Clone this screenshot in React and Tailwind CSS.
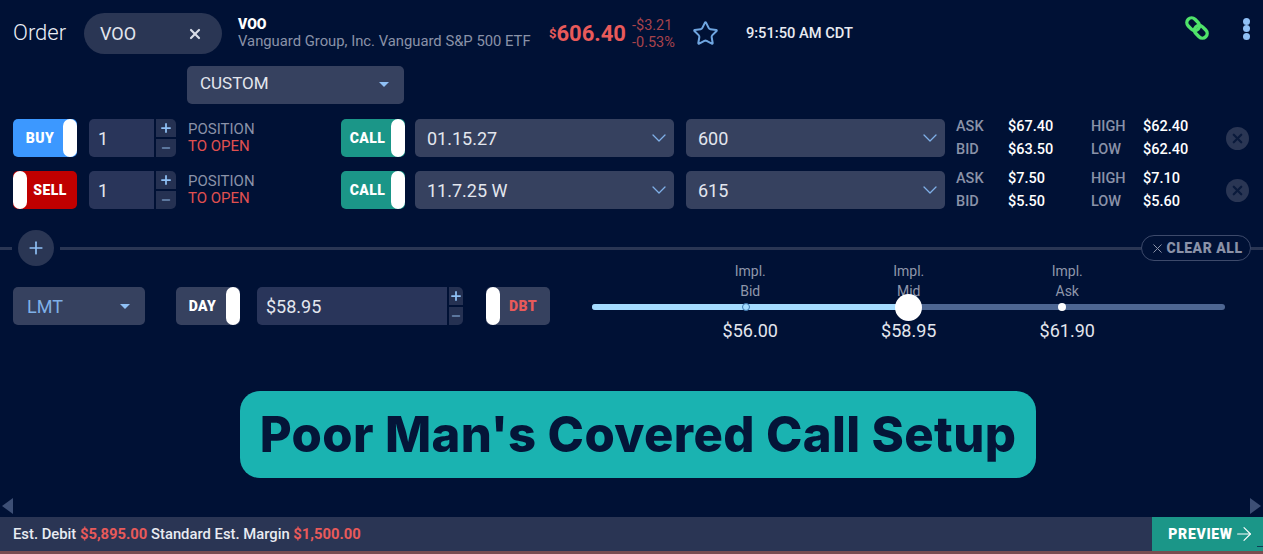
import React from 'react';
import { ChevronDown, Star, X, Plus, Minus, ArrowRight } from 'lucide-react';

const legs = [
    { side: 'BUY', expiry: '01.15.27', strike: '600', ask: '$67.40', bid: '$63.50', high: '$62.40', low: '$62.40' },
    { side: 'SELL', expiry: '11.7.25 W', strike: '615', ask: '$7.50', bid: '$5.50', high: '$7.10', low: '$5.60' },
];

const marks = [
    { label: 'Bid', price: '$56.00' },
    { label: 'Mid', price: '$58.95' },
    { label: 'Ask', price: '$61.90' },
];

const Caret = () => (
    <span className="w-0 h-0 border-x-[5px] border-x-transparent border-t-[5px] border-t-[#8fc0f5]" />
);

const Knob = ({ className = '' }) => (
    <span className={`w-[14px] h-full bg-white rounded-[7px] shrink-0 ${className}`} />
);

const ChainIcon = () => (
    <svg width="24" height="24" viewBox="0 0 24 24" fill="none" stroke="#4fe36a" strokeWidth="3.4" className="-mt-[11px] ml-auto">
        <rect x="1.2" y="3.45" width="14" height="9.5" rx="4.75" transform="rotate(45 8.2 8.2)" />
        <rect x="8.8" y="11.05" width="14" height="9.5" rx="4.75" transform="rotate(45 15.8 15.8)" />
    </svg>
);

const Stepper = ({ value, inputW, stepW }) => (
    <div className="flex h-full">
        <div className={`${inputW} h-full bg-[#29355a] rounded-l-[5px] flex items-center pl-[9px] text-[18px] text-[#e3e6ee]`}>{value}</div>
        <div className={`${stepW} ml-0.5 flex flex-col gap-0.5`}>
            <span className="flex-1 bg-[#253152] rounded-tr-[5px] flex items-center justify-center text-[#8fc0f5]"><Plus size={14} strokeWidth={3} /></span>
            <span className="flex-1 bg-[#253152] rounded-br-[5px] flex items-center justify-center text-[#6f8fb8]"><Minus size={12} strokeWidth={3} /></span>
        </div>
    </div>
);

const Select = ({ value, width }) => (
    <div className={`${width} h-full bg-[#36415f] rounded-[5px] flex items-center justify-between pl-3 pr-[3px] text-[18px] text-[#e3e6ee]`}>
        {value}
        <ChevronDown size={24} strokeWidth={1.3} className="text-[#7fb0e8]" />
    </div>
);

const Leg = ({ leg }) => (
    <div className="flex h-[38px] items-stretch">
        {leg.side === 'BUY' ? (
            <div className="w-16 bg-[#3c98ff] rounded-[5px] flex items-center justify-between text-white text-[14px] font-black tracking-[0.4px]">
                <span className="w-[54px] text-center">BUY</span>
                <Knob className="-ml-1" />
            </div>
        ) : (
            <div className="w-16 bg-[#c00000] rounded-[5px] flex items-center justify-between text-white text-[14px] font-black tracking-[0.4px]">
                <Knob />
                <span className="flex-1 text-center pr-1">SELL</span>
            </div>
        )}
        <div className="ml-3 w-[87px]">
            <Stepper value="1" inputW="w-[65px]" stepW="w-5" />
        </div>
        <div className="ml-3 w-[153px] flex flex-col justify-center text-[15px] leading-[17px]">
            <span className="text-[#8a92a8]">POSITION</span>
            <span className="text-[#e05050]">TO OPEN</span>
        </div>
        <div className="w-16 bg-[#1b9688] rounded-[5px] flex items-center justify-between text-white text-[14px] font-black tracking-[0.4px]">
            <span className="w-[53px] text-center">CALL</span>
            <Knob className="-ml-[3px]" />
        </div>
        <div className="ml-[10px]"><Select value={leg.expiry} width="w-[259px]" /></div>
        <div className="ml-[12px]"><Select value={leg.strike} width="w-[259px]" /></div>
        <div className="ml-[11px] grid grid-cols-[52px_83px_52px_83px] content-center text-[14.5px] leading-[23px] font-medium">
            <span className="text-[#8a92a8]">ASK</span>
            <span className="text-white">{leg.ask}</span>
            <span className="text-[#8a92a8]">HIGH</span>
            <span className="text-white">{leg.high}</span>
            <span className="text-[#8a92a8]">BID</span>
            <span className="text-white">{leg.bid}</span>
            <span className="text-[#8a92a8]">LOW</span>
            <span className="text-white">{leg.low}</span>
        </div>
        <div className="self-center w-[23px] h-[23px] rounded-full bg-[#2a3654] flex items-center justify-center text-[#0a1a3c]">
            <X size={15} strokeWidth={3.5} />
        </div>
    </div>
);

export default function App() {
    return (
        <div className="w-[1263px] h-[554px] overflow-hidden bg-[#001135] flex flex-col" style={{ fontFamily: 'Roboto, sans-serif' }}>
            {/* header */}
            <div className="h-[41px] mt-[13px] ml-[13px] mr-[13px] flex items-center">
                <span className="text-[22px] font-light text-[#eceff5] w-[71px] -mt-[2px]">Order</span>
                <div className="w-[138px] h-[41px] bg-[#2a3654] rounded-full flex items-center justify-between pl-4 pr-[19px] text-[18px] text-[#e3e6ee]">
                    VOO
                    <X size={16} strokeWidth={3.2} className="text-[#d8dce6]" />
                </div>
                <div className="ml-4 w-[311px] flex flex-col -mt-[2px]">
                    <span className="text-[14px] leading-[16px] font-black text-white">VOO</span>
                    <span className="text-[14.8px] leading-[18px] text-[#8a92a8] whitespace-nowrap">Vanguard Group, Inc. Vanguard S&amp;P 500 ETF</span>
                </div>
                <div className="flex items-start text-[#e85a5a] font-bold">
                    <span className="text-[13px] mt-[2px]">$</span>
                    <span className="text-[22px] leading-[24px]">606.40</span>
                </div>
                <div className="ml-[6px] flex flex-col text-[14.5px] leading-[17px] text-[#a8434c]">
                    <span>-$3.21</span>
                    <span>-0.53%</span>
                </div>
                <Star size={27} strokeWidth={1.8} className="ml-[17px] text-[#6ea5e0] -mt-[1px]" />
                <span className="ml-[27px] text-[14.7px] font-medium text-[#e8ebf2] -mt-[1px]">9:51:50 AM CDT</span>
                <ChainIcon />
                <div className="ml-[34px] -mt-[10px] flex flex-col gap-[0.5px]">
                    <span className="w-[7px] h-[7px] rounded-full bg-[#8fc0f5]" />
                    <span className="w-[7px] h-[7px] rounded-full bg-[#8fc0f5]" />
                    <span className="w-[7px] h-[7px] rounded-full bg-[#8fc0f5]" />
                </div>
            </div>

            <div className="ml-[187px] mt-3 w-[217px] h-[38px] bg-[#36415f] rounded-[5px] flex items-center justify-between pl-[13px] pr-[15px] pb-[2px] text-[17px] text-[#e3e6ee]">
                CUSTOM
                <Caret />
            </div>

            {/* legs */}
            <div className="ml-[13px] mt-[15px] flex flex-col gap-[14px]">
                {legs.map(leg => <Leg key={leg.side} leg={leg} />)}
            </div>

            {/* divider */}
            <div className="mt-[21px] h-[36px] flex items-center">
                <div className="w-3 h-[3px] bg-[#2a3654]" />
                <div className="ml-[6px] w-9 h-9 rounded-full bg-[#2a3654] flex items-center justify-center text-[#8fc0f5] shrink-0">
                    <Plus size={20} strokeWidth={2} />
                </div>
                <div className="ml-[6px] flex-1 h-[3px] bg-[#2a3654]" />
                <div className="w-[110px] h-[26px] rounded-full border border-[#3d4a6b] flex items-center justify-center gap-[2px] text-[14px] font-black text-[#8a92a8] tracking-[0.5px] shrink-0">
                    <X size={15} strokeWidth={1.6} />CLEAR ALL
                </div>
                <div className="w-3 h-[3px] bg-[#2a3654]" />
            </div>

            {/* price row */}
            <div className="ml-[13px] mt-[3px] h-[76px] flex">
                <div className="mt-[18px] w-[132px] h-[38px] bg-[#36415f] rounded-[5px] flex items-center justify-between pl-[14px] pr-[15px] text-[18px] text-[#7fb0e8]">
                    LMT
                    <Caret />
                </div>
                <div className="ml-[31px] mt-[18px] w-16 h-[38px] bg-[#36415f] rounded-[5px] flex items-center justify-between text-white text-[14px] font-black tracking-[0.4px]">
                    <span className="w-[53px] text-center">DAY</span>
                    <Knob className="-ml-[3px]" />
                </div>
                <div className="ml-[17px] mt-[18px] w-[206px] h-[38px]">
                    <Stepper value="$58.95" inputW="w-[190px]" stepW="w-[14px]" />
                </div>
                <div className="ml-[23px] mt-[18px] w-16 h-[38px] bg-[#36415f] rounded-[5px] flex items-center text-[#e85a5a] text-[14px] font-black tracking-[0.4px]">
                    <Knob />
                    <span className="flex-1 text-center pr-1">DBT</span>
                </div>

                {/* slider */}
                <div className="ml-[42px] w-[633px] flex flex-col -mt-[8px]">
                    <div className="ml-[79px] grid grid-cols-[158.5px_158.5px_158.5px] text-center text-[14px] leading-[20px] text-[#8f96aa]">
                        {marks.map(m => (
                            <div key={m.label} className="flex flex-col">
                                <span>Impl.</span>
                                <span>{m.label}</span>
                            </div>
                        ))}
                    </div>
                    <div className="relative mt-[3px] h-[6px] rounded-full bg-[#4d6692]">
                        <div className="h-full w-[316px] rounded-l-full bg-[#a5dcff]" />
                        <span className="absolute left-[150px] top-[-1px] w-2 h-2 rounded-full bg-[#a5dcff] border border-[#3f78b0]" />
                        <span className="absolute left-[466px] top-[-1px] w-2 h-2 rounded-full bg-white" />
                        <span className="absolute left-[303px] top-[-10px] w-[27px] h-[27px] rounded-full bg-white" />
                    </div>
                    <div className="ml-[79px] mt-[9px] grid grid-cols-[158.5px_158.5px_158.5px] text-center text-[18px] leading-[24px] text-[#e3e6ee]">
                        {marks.map(m => <span key={m.label}>{m.price}</span>)}
                    </div>
                </div>
            </div>

            {/* banner */}
            <div className="ml-[240px] mt-[46px] w-[796px] h-[87px] rounded-[20px] bg-[#1ab3b1] flex items-center justify-center text-[49px] font-extrabold tracking-[0.38px] text-[#041538] whitespace-nowrap shrink-0" style={{ fontFamily: 'Inter, sans-serif' }}>
                Poor Man's Covered Call Setup
            </div>

            {/* scroll arrows */}
            <div className="mt-[20px] h-[16px] flex items-center justify-between px-[2px] shrink-0">
                <span className="w-0 h-0 border-y-[8px] border-y-transparent border-r-[11px] border-r-[#3d4f75]" />
                <span className="w-0 h-0 border-y-[8px] border-y-transparent border-l-[11px] border-l-[#3d4f75]" />
            </div>

            {/* footer */}
            <div className="mt-[3px] h-[34px] bg-[#2a3554] flex items-center text-[14.8px] text-[#e8ebf2] shrink-0">
                <span className="ml-[13px] font-medium">Est. Debit <b className="text-[#e85a5a] font-bold">$5,895.00</b> Standard Est. Margin <b className="text-[#e85a5a] font-bold">$1,500.00</b></span>
                <div className="ml-auto w-[111px] h-full bg-[#1b9688] flex items-center justify-center pl-[8px] text-[14px] font-black tracking-[0.7px] text-white relative">
                    PREVIEW <ArrowRight size={22} strokeWidth={1.2} />
                    <span className="absolute right-0 bottom-1 w-[6px] h-px bg-[#0d3f55]" />
                </div>
            </div>
            <div className="h-[3px] bg-[#7a4c50] shrink-0" />
        </div>
    );
}
